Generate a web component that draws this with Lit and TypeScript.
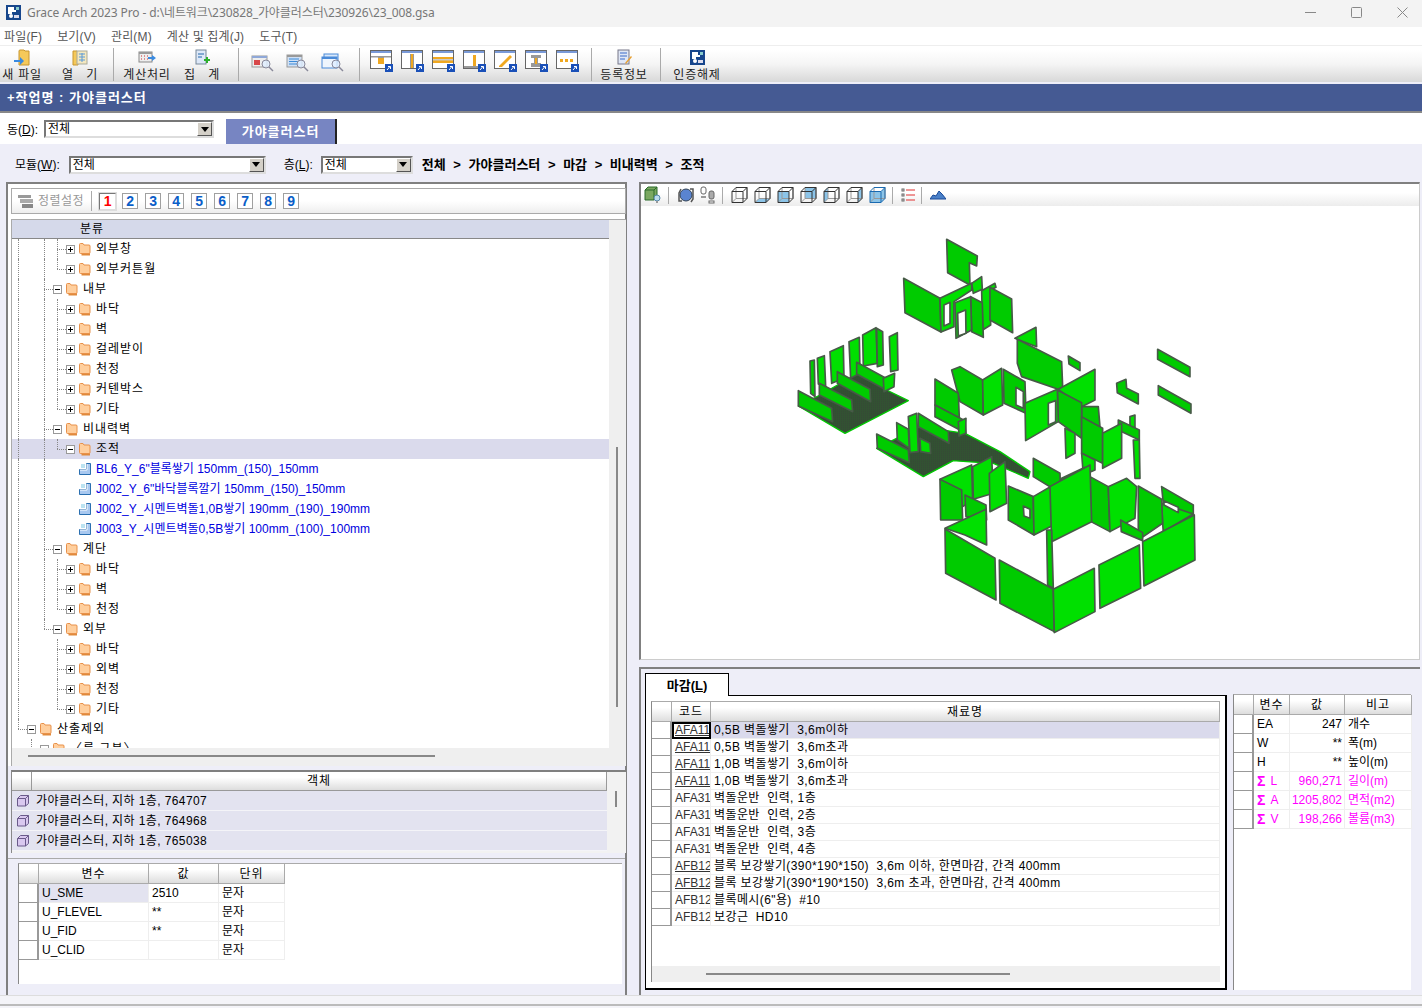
import { LitElement, css, html, svg } from 'lit';
import { customElement } from 'lit/decorators.js';

const folder = html`<svg class="ficon" width="12" height="13" viewBox="0 0 12 13"><path d="M2.500 2.500h8.500v10H2.500z" fill="#e08a3c"/><path d="M.5 1.500q0-1 1-1h2.500l1 1.500h5q1 0 1 1v6.500q0 1-1 1H1.500q-1 0-1-1z" fill="#ffcf9e" stroke="#e8914a"/></svg>`;
const leaf = html`<svg class="ficon" width="12" height="12" viewBox="0 0 12 12"><path d="M.5 6.500h7v-6h4v11H.5z" fill="#a9c8ef" stroke="#2a6fb0"/><path d="M1 7h7M8 1v6" stroke="#fff"/><rect x="2" y="1" width="4" height="4" fill="#8fd0e8" opacity=".6"/></svg>`;
const box3d = html`<svg width="13" height="13" viewBox="0 0 13 13"><path d="M1.500 4.500l3-3h8v8l-3 2.500h-8z" fill="#d9c8ef" stroke="#6a5a8a"/><path d="M1.500 4.500h8v7.500M9.500 4.500l3-3" fill="none" stroke="#6a5a8a"/></svg>`;

// [guides, expander, label, kind]; guides: v = line, t = tee, l = corner, _ = empty
const tree: [string, string, string, string?][] = [
  ['v_vt', '+', '외부창'], ['v_vl', '+', '외부커튼월'],
  ['v_t', '-', '내부'],
  ['v_vt', '+', '바닥'], ['v_vt', '+', '벽'], ['v_vt', '+', '걸레받이'], ['v_vt', '+', '천정'], ['v_vt', '+', '커텐박스'], ['v_vl', '+', '기타'],
  ['v_t', '-', '비내력벽'],
  ['v_vl', '-', '조적', 'sel'],
  ['v_v__', '', 'BL6_Y_6"블록쌓기 150mm_(150)_150mm', 'leaf'],
  ['v_v__', '', 'J002_Y_6"바닥블록깔기 150mm_(150)_150mm', 'leaf'],
  ['v_v__', '', 'J002_Y_시멘트벽돌1,0B쌓기 190mm_(190)_190mm', 'leaf'],
  ['v_v__', '', 'J003_Y_시멘트벽돌0,5B쌓기 100mm_(100)_100mm', 'leaf'],
  ['v_t', '-', '계단'],
  ['v_vt', '+', '바닥'], ['v_vt', '+', '벽'], ['v_vl', '+', '천정'],
  ['v_l', '-', '외부'],
  ['v__t', '+', '바닥'], ['v__t', '+', '외벽'], ['v__t', '+', '천정'], ['v__l', '+', '기타'],
  ['l', '-', '산출제외'],
  ['_v', '-', '〈룸 구분〉'],
];

const materials: [string, string, boolean][] = [
  ['AFA11', '0,5B 벽돌쌓기  3,6m이하', true],
  ['AFA11', '0,5B 벽돌쌓기  3,6m초과', true],
  ['AFA11', '1,0B 벽돌쌓기  3,6m이하', true],
  ['AFA11', '1,0B 벽돌쌓기  3,6m초과', true],
  ['AFA31', '벽돌운반  인력, 1층', false],
  ['AFA31', '벽돌운반  인력, 2층', false],
  ['AFA31', '벽돌운반  인력, 3층', false],
  ['AFA31', '벽돌운반  인력, 4층', false],
  ['AFB12', '블록 보강쌓기(390*190*150)  3,6m 이하, 한면마감, 간격 400mm', true],
  ['AFB12', '블록 보강쌓기(390*190*150)  3,6m 초과, 한면마감, 간격 400mm', true],
  ['AFB12', '블록메시(6"용)  #10', false],
  ['AFB12', '보강근  HD10', false],
];

const sums: [string, string, string, boolean][] = [
  ['EA', '247', '개수', false], ['W', '**', '폭(m)', false], ['H', '**', '높이(m)', false],
  ['L', '960,271', '길이(m)', true], ['A', '1205,802', '면적(m2)', true], ['V', '198,266', '볼륨(m3)', true],
];

const vars = [['U_SME', '2510', '문자'], ['U_FLEVEL', '**', '문자'], ['U_FID', '**', '문자'], ['U_CLID', '', '문자']];

// model faces, in 3x coordinates from the model's corner: light = front facing, dark = side facing
const light = [
  '480,205 575,160 575,180 522,215 522,290 483,306', '575,160 605,140 607,178 580,190', '525,218 572,200 575,300 528,325', '605,182 645,160 648,172 632,180 632,285 608,300',
  '150,365 190,347 192,445 155,460', '207,335 238,322 240,430 212,445', '248,315 288,293 292,400 250,408', '328,320 352,308 354,420 332,425', '112,385 133,377 137,470 115,462', '310,445 344,430 342,470 312,485',
  '350,578 385,598 388,655 352,630', '385,560 410,550 415,665 390,668', '535,575 558,565 557,610 537,618', '420,625 450,640 452,670 422,665',
  '608,450 665,415 668,525 610,555', '705,325 768,292 770,350 712,328', '835,478 945,418 945,510 905,530', '735,520 832,478 835,575 737,632', '855,595 885,610 885,670 858,685',
  '968,610 1025,580 1025,685 968,715', '905,670 945,690 945,720 910,735', '845,745 915,712 915,800 845,800', '1050,560 1065,555 1065,595 1050,590', '1060,630 1078,630 1080,745 1065,745',
  '480,748 575,705 578,810 548,830', '578,710 635,680 640,790 580,808', '628,730 675,695 680,820 630,845', '760,800 855,745 870,860 762,915', '810,770 930,705 935,875 815,935',
  '985,770 1040,745 1070,770 1065,865 990,905', '1145,820 1240,852 1150,905 1148,880', '495,895 618,838 620,945 555,915',
  '820,1078 943,1015 945,1145 823,1208', '957,1005 1078,945 1082,1075 960,1135', '1088,935 1243,855 1245,990 1092,1068',
];
const dark = [
  '500,28 592,78 590,108 568,98 570,165 503,128', '371,145 480,205 483,306 375,248', '572,200 607,218 610,322 575,305', '630,172 695,207 698,308 630,270',
  '55,482 155,535 158,575 55,528', '118,460 215,510 218,545 118,495', '172,425 270,478 272,515 172,460', '230,397 318,445 318,480 230,432', '290,295 308,305 310,405 292,410', '90,393 103,390 105,500 92,490',
  '290,612 385,660 388,698 292,655', '415,550 505,605 507,640 415,590', '465,525 555,572 558,610 465,560',
  '465,447 535,490 538,565 465,525', '515,420 540,410 608,450 610,555 540,515', '670,418 735,455 738,550 672,520', '712,328 845,395 848,470 835,478 725,440 712,400', '832,480 905,518 905,625 835,575', '865,378 900,398 900,422 867,402',
  '1133,358 1230,412 1230,440 1133,388', '1135,467 1233,522 1233,550 1135,495', '1010,460 1038,448 1040,475 1075,492 1075,522 1012,488',
  '905,530 955,530 960,590 905,565', '905,560 968,595 968,700 905,670', '1015,570 1078,600 1078,630 1015,600',
  '480,748 545,780 548,870 482,870', '760,685 840,730 842,790 760,740', '685,768 760,800 762,915 685,870', '875,790 915,810 915,835 878,818', '930,740 985,770 990,905 933,875',
  '1075,768 1145,808 1148,880 1090,920 1075,905', '1145,770 1240,825 1240,852 1195,848 1150,820', '1022,870 1088,908 1088,932 1024,905', '555,795 618,825 620,870 558,860',
  '495,897 645,985 648,1110 497,1030', '658,990 820,1078 823,1205 660,1120', '800,900 815,900 820,1075 803,1065',
];
const floors = ['55,528 195,610 385,512 320,480 230,432 120,495', '290,655 430,740 520,692 560,695 640,700 745,745 750,725 660,665 555,610 420,590'];
const holes = ['492,225 510,217 510,280 492,288', '533,250 557,240 558,310 535,318', '708,472 730,485 730,535 708,525', '805,520 827,512 827,575 805,585', '1152,812 1195,832 1195,848 1152,825', '730,828 750,838 750,865 732,858'];

const bottom = (p: string) => Math.max(...p.split(' ').map(xy => Number(xy.split(',')[1])));
const faces = [...dark.map(p => ({ p, fill: '#00cb00' })), ...light.map(p => ({ p, fill: '#00e000' }))]
  .sort((a, b) => bottom(a.p) - bottom(b.p));

const model = svg`
  <defs>
    <pattern id="hatch" width="6" height="6" patternUnits="userSpaceOnUse"><rect width="6" height="6" fill="#354a35"/><path d="M0 3h2M4 0h1" stroke="#1a8f1a"/></pattern>
  </defs>
  <g transform="translate(139 24) scale(.3333)" stroke="#475a47" stroke-width="5" stroke-linejoin="round">
    ${floors.map(p => svg`<polygon points=${p} fill="url(#hatch)" stroke="#00c800" stroke-width="4"/>`)}
    ${faces.map(f => svg`<polygon points=${f.p} fill=${f.fill}/>`)}
    ${holes.map(p => svg`<polygon points=${p} fill="#fff"/>`)}
  </g>`;

const winIcon = (inner: unknown) => html`<svg width="24" height="23" viewBox="0 0 24 23">
  <rect x=".5" y=".5" width="21" height="18" fill="#fff" stroke="#666"/>
  <rect x="1" y="1" width="20" height="2" fill="#7a9ad8"/>
  ${inner}
  <rect x="15" y="14" width="8" height="8" fill="#1a50b8"/><path d="M17 20l3-3.500M18 16.500h2.500V19" stroke="#fff" fill="none"/>
</svg>`;

const windows = [
  svg`<path d="M1 6h20v1.500H14V13H8V7.500H1z" fill="#999"/><rect x="8" y="8" width="6" height="6" fill="#f0a820"/>`,
  svg`<rect x="9" y="4" width="4" height="14" fill="#999"/><rect x="10" y="4" width="2" height="14" fill="#f0a820"/>`,
  svg`<rect x="1" y="7" width="20" height="6" fill="#f0a820"/><rect x="1" y="9" width="20" height="1.500" fill="#ccc"/>`,
  svg`<rect x="10" y="5" width="3" height="11" fill="#f0a820"/><rect x="1" y="16" width="15" height="2" fill="#999"/>`,
  svg`<path d="M5 16l11-11 2 2-10 10H5z" fill="#f0a820"/>`,
  svg`<path d="M6 5h10v3h-3v5h3v4H6v-4h3V8H6z" fill="#999"/><rect x="10" y="8" width="2" height="6" fill="#f0a820"/>`,
  svg`<rect x="4" y="9" width="3" height="3" fill="#f0a820"/><rect x="9" y="9" width="3" height="3" fill="#f0a820"/><rect x="14" y="9" width="3" height="3" fill="#f0a820"/>`,
];

const lens = svg`<circle cx="15" cy="11" r="4" fill="#dfeeff" fill-opacity=".8" stroke="#889"/><path d="M18 14l4 4" stroke="#889" stroke-width="1.500"/>`;
const searchIcons = [
  html`<svg width="24" height="20" viewBox="0 0 24 20"><rect x="1" y="3" width="15" height="11" fill="#eee" stroke="#999"/><rect x="1" y="3" width="15" height="2" fill="#8fa8d8"/><rect x="3" y="7" width="6" height="5" fill="#d8484a"/>${lens}</svg>`,
  html`<svg width="24" height="20" viewBox="0 0 24 20"><rect x="1" y="2" width="15" height="12" fill="#cfe0f5" stroke="#999"/><rect x="1" y="2" width="15" height="2" fill="#999"/><path d="M3 6h10M3 8.500h10M3 11h10" stroke="#3a8ad8"/>${lens}</svg>`,
  html`<svg width="24" height="20" viewBox="0 0 24 20"><rect x="3" y="1" width="14" height="8" fill="#d8e8fb" stroke="#4a8ad8"/><rect x="1" y="4" width="15" height="11" fill="#eef5fd" stroke="#4a8ad8"/><rect x="1" y="4" width="15" height="2" fill="#4a8ad8"/>${lens}</svg>`,
];

const cube = (face: string) => html`<svg width="17" height="16" viewBox="0 0 17 16">
  ${face === 'top' ? svg`<path d="M1 4.500l4-4h11l-4 4z" fill="#8cc4e8"/>` : ''}
  ${face === 'bottom' ? svg`<path d="M1 15.500l4-4h11l-4 4z" fill="#8cc4e8"/>` : ''}
  ${face === 'front' || face === 'all' ? svg`<rect x="1" y="4.500" width="11" height="11" fill="#8cc4e8"/>` : ''}
  ${face === 'back' ? svg`<rect x="5" y=".5" width="11" height="11" fill="#8cc4e8"/>` : ''}
  ${face === 'left' ? svg`<path d="M1 4.500l4-4v11l-4 4z" fill="#8cc4e8"/>` : ''}
  ${face === 'right' || face === 'all' ? svg`<path d="M12 4.500l4-4v11l-4 4z" fill="#8cc4e8"/>` : ''}
  <path d="M5 .5h11v11H5zM1 15.500l4-4" fill="none" stroke="#999"/>
  <path d="M1 4.500h11v11H1zM1 4.500l4-4h11v11l-4 4M12 4.500l4-4" fill="none" stroke=${face === 'all' ? '#1a6ab0' : '#333'}/>
</svg>`;

const arrow = html`<span class="arrow"></span>`;

const logo = html`<svg width="15" height="15" viewBox="0 0 15 15"><rect width="15" height="15" fill="#17468c"/><path d="M2 2h6v3h2v2H6v2H2z" fill="#fff"/><rect x="10" y="2" width="3" height="3" fill="#8cc"/><circle cx="5" cy="11" r="2" fill="#fff"/><path d="M8 10h5v3H8z" fill="#dde"/></svg>`;

@customElement('app-root')
export class AppRoot extends LitElement {
  static styles = css`
    :host { display: block; width: 1422px; height: 1008px; overflow: hidden; background: #eeeef8; color: #000;
      font: 12px/1 "Liberation Sans", "Noto Sans CJK KR", sans-serif; }
    * { box-sizing: border-box; }
    svg { display: block; flex: none; }

    .title { height: 27px; background: #f3f3f3; display: flex; align-items: center; padding: 0 0 3px 6px; gap: 6px; color: #777; font: 12px "Noto Sans", "Noto Sans CJK KR", sans-serif; letter-spacing: -.1px; }
    .title .ctl { margin-left: auto; margin-right: -3px; display: flex; }
    .ctl span { width: 46px; height: 24px; display: flex; align-items: center; justify-content: center; }
    .menu { height: 18px; background: #fff; display: flex; gap: 15px; padding: 2px 0 0 4px; color: #555; align-items: center; letter-spacing: .15px; }
    .toolbar { height: 37px; background: linear-gradient(#fff 10%, #f5f5f5 50%, #d8d8d8); border-top: 1px solid #eee; display: flex; align-items: stretch; margin-bottom: 2px; }
    .group { display: flex; align-items: flex-start; border-right: 1px solid #aaa; margin: 2px 0; height: 33px; flex: none; }
    .g1 { width: 114px; gap: 14px; }
    .g2 { width: 125px; gap: 11px; padding-left: 11px; }
    .g3 { width: 121px; gap: 5px; padding: 5px 0 0 9px; }
    .g4 { width: 232px; padding: 2px 0 0 6px; }
    .g5 { width: 69px; padding-left: 10px; }
    .g6 { width: 100px; padding-left: 14px; border: 0; }
    .tool { width: 44px; margin-top: 1px; display: flex; flex-direction: column; align-items: center; gap: 3px; color: #222; white-space: pre; letter-spacing: .8px; }
    .tool svg { height: 17px; }
    .g3 > span { width: 30px; display: flex; justify-content: center; }
    .g4 > span { width: 31px; display: flex; justify-content: center; }

    .job { height: 29px; background: #455a93; border-bottom: 2px solid #888; color: #fff; font-weight: 700; display: flex; align-items: center; padding-left: 7px; font-size: 13px; letter-spacing: 1px; }
    .dong { height: 31px; background: #fff; display: flex; align-items: flex-end; padding-left: 7px; }
    .dong label { margin-bottom: 8px; margin-right: 6px; }
    .dong .combo { width: 170px; margin-bottom: 6px; }
    .tabhead { margin-left: 12px; width: 111px; height: 25px; background: #7785c2; color: #fff; font-weight: 700; font-size: 13px; letter-spacing: 1px; display: flex; align-items: center; justify-content: center; border-right: 2px solid #222; }
    u { text-decoration: underline; }
    .combo { height: 18px; border: 2px solid; border-color: #777 #ddd #ddd #777; background: #fff; display: flex; align-items: center; padding-left: 2px; justify-content: space-between; }
    .arrow { width: 15px; height: 14px; background: #d4d0c8; border: 1px solid; border-color: #fff #555 #555 #fff; display: flex; align-items: center; justify-content: center; }
    .arrow::after { content: ""; border: 4px solid transparent; border-top: 5px solid #000; border-bottom: 0; }

    .module { height: 38px; display: flex; align-items: center; padding: 3px 0 0 15px; }
    .module label { margin-right: 9px; }
    .module label.l2 { margin-right: 8px; }
    .c1 { width: 197px; margin-right: 18px; }
    .c2 { width: 92px; margin-right: 9px; }
    .crumb { font-weight: 700; font-size: 13px; word-spacing: 4px; }

    .main { height: 813px; display: flex; padding-left: 6px; gap: 12px; }
    .left { width: 621px; flex: none; display: flex; flex-direction: column; border: solid #808080; border-width: 2px 2px 0 2px; }
    .treepanel { height: 582px; padding: 4px 0 0 3px; background: #fff; display: flex; flex-direction: column; }
    .sortbar { height: 26px; width: 615px; border: 1px solid #aaa; display: flex; align-items: center; padding-left: 5px; background: linear-gradient(#fff 50%, #eee); color: #999; flex: none; }
    .sortbar .sort { display: flex; align-items: center; gap: 3px; padding-right: 7px; border-right: 1px solid #aaa; height: 20px; margin-right: 7px; letter-spacing: .5px; }
    .num { width: 16px; height: 16px; margin-right: 7px; border: 1px solid #a0a0a0; color: #0a5ec8; background: #fff; font-weight: 700; font-size: 14px; display: flex; align-items: center; justify-content: center; }
    .num.on { color: #f00; border-color: #777 #ddd #ddd #777; width: 17px; height: 17px; margin-right: 6px; outline: 1px solid #ddd; }
    .treewrap { margin-top: 5px; display: flex; width: 615px; height: 547px; border-top: 1px solid #aaa; border-left: 1px solid #aaa; background: #efefef; position: relative; }
    .treecol { width: 597px; height: 528px; background: #fff; display: flex; flex-direction: column; }
    .treehead { height: 19px; flex: none; background: #d5d9ea; border-bottom: 1px solid #888; padding: 3px 0 0 68px; letter-spacing: 1px; }
    .rows { flex: 1; overflow: hidden; }
    .row { height: 20px; display: flex; align-items: center; white-space: pre; letter-spacing: 1px; }
    .row.sel { background: #dadaec; }
    .row.leaf { color: #0000e0; letter-spacing: 0; }
    .cell { width: 13px; height: 20px; flex: none; position: relative; }
    .cell.v::before, .cell.t::before, .cell.l::before { content: ""; position: absolute; left: 6px; top: 0; bottom: 0; border-left: 1px dotted #888; }
    .cell.l::before { bottom: 10px; }
    .cell.t::after, .cell.l::after { content: ""; position: absolute; left: 6px; right: -2px; top: 10px; border-top: 1px dotted #888; }
    .exp { width: 13px; height: 20px; flex: none; display: flex; align-items: center; justify-content: center; }
    .exp span { width: 9px; height: 9px; background: #fff; border: 1px solid #999; position: relative; z-index: 1; }
    .exp span::before { content: ""; position: absolute; left: 1px; right: 1px; top: 3px; height: 1px; background: #000; }
    .exp .plus::after { content: ""; position: absolute; top: 1px; bottom: 1px; left: 3px; width: 1px; background: #000; }
    .ficon { margin-left: 2px; }
    .row .txt { margin-left: 5px; }
    .vthumb { position: absolute; left: 604px; top: 227px; width: 2px; height: 260px; background: #888; }
    .hthumb { position: absolute; left: 16px; top: 535px; width: 407px; height: 2px; background: #888; }

    .gap { height: 4px; flex: none; background: #eeeef8; }
    .objects { height: 83px; flex: none; border-top: 2px solid #808080; background: #f2f2f2; display: flex; margin-left: 3px; width: 615px; border-left: 1px solid #888; position: relative; flex-direction: column; }
    .ohead { display: grid; grid-template-columns: 20px 575px; height: 19px; flex: none; }
    .ohead div { background: linear-gradient(#fff 30%, #ddd); border-right: 1px solid #999; border-bottom: 1px solid #999; display: flex; align-items: center; justify-content: center; letter-spacing: 1px; }
    .orow { height: 20px; flex: none; width: 595px; display: grid; grid-template-columns: 20px 1fr; background: #e3e3f0; border-bottom: 1px solid #f4f4f8; align-items: center; letter-spacing: .4px; }
    .orow span:first-child { display: flex; justify-content: center; }
    .orow span + span { padding-left: 4px; }
    .othumb { position: absolute; left: 603px; top: 19px; width: 2px; height: 16px; background: #888; }
    .vars { flex: 1; padding: 4px 0 0 10px; border-top: 1px solid #aaa; margin-top: 5px; background: #eeeef8; }
    .vars .frame { width: 604px; height: 121px; background: #fff; border-top: 1px solid #aaa; border-left: 1px solid #888; }

    .grid { display: grid; }
    .h { background: linear-gradient(#fff 30%, #ddd); border-right: 1px solid #aaa; border-bottom: 1px solid #aaa; display: flex; align-items: center; justify-content: center; height: 20px; letter-spacing: 1px; }
    .c { height: 19px; border-right: 1px solid #eee; border-bottom: 1px solid #eee; display: flex; align-items: center; padding: 0 3px; white-space: pre; overflow: hidden; background: #fff; }
    .rh { background: #fff; border-right: 2px solid #999; border-bottom: 1px solid #999; height: 19px; }
    .vgrid { width: 266px; grid-template-columns: 20px 110px 70px 66px; }
    .vgrid .hl { background: #e3e3f0; }

    .right { width: 781px; flex: none; display: flex; flex-direction: column; }
    .viewer { height: 478px; flex: none; border: solid #808080; border-width: 2px 0 0 2px; background: #fff; display: flex; flex-direction: column; border-bottom: 1px solid #ccc; border-right: 1px solid #ccc; }
    .vbar { height: 22px; flex: none; display: flex; align-items: center; background: linear-gradient(#fff 40%, #ececec); padding-left: 3px; }
    .vbar .sep { width: 1px; height: 17px; background: #aaa; margin: 0 8px 0 6px; }
    .vbar .cubes { display: flex; gap: 6px; }
    .vbar .foot { margin-left: 5px; }
    .canvas { flex: 1; width: 100%; min-height: 0; }
    .lower { flex: none; height: 328px; margin-top: 7px; border: solid #808080; border-width: 2px 0 0 2px; padding: 4px 0 0 4px; display: flex; background: #eeeef8; }
    .tabpane { width: 582px; display: flex; flex-direction: column; }
    .ltab { width: 84px; height: 23px; background: #fff; border: 1px solid #000; border-bottom: 0; font-weight: 700; font-size: 13px; display: flex; align-items: center; justify-content: center; margin-bottom: -1px; position: relative; z-index: 1; }
    .pane { height: 295px; border: 1px solid #000; border-width: 1px 2px 2px 1px; background: #fff; padding: 5px 0 0 5px; }
    .frame2 { width: 569px; height: 281px; border-top: 1px solid #aaa; border-left: 1px solid #888; display: flex; flex-direction: column; }
    .mgrid { grid-template-columns: 20px 39px 509px; letter-spacing: .4px; }
    .mgrid .h { height: 20px; letter-spacing: 1px; }
    .mgrid .c, .mgrid .rh { height: 17px; }
    .mgrid .code { padding: 0; padding-left: 3px; color: #333; letter-spacing: 0; }
    .mgrid .code.link { text-decoration: underline; }
    .mgrid .code.focus { outline: 2px solid #000; outline-offset: -2px; }
    .mgrid .first { background: #dadaec; }
    .fill { flex: 1; }
    .mscroll { height: 16px; flex: none; background: #efefef; display: flex; align-items: center; padding-left: 54px; }
    .mscroll span { width: 304px; height: 2px; background: #888; }
    .sum { margin: 21px 0 0 6px; width: 178px; background: #fff; height: 296px; border-top: 1px solid #aaa; border-left: 1px solid #888; align-self: flex-start; }
    .sgrid { grid-template-columns: 20px 36px 55px 67px; }
    .sgrid .num2 { justify-content: flex-end; padding-right: 2px; }
    .sgrid .mag { color: #f0f; }
    .sgrid b { margin-right: 5px; font-size: 14px; }
    .sgrid .rh, .sgrid .c { height: 19px; }
    .status { height: 13px; background: #f4f4f8; border-top: 1px solid #ddd; }
    .status div { height: 10px; border-bottom: 2px solid #bbb; }
  `;

  renderRow(r: [string, string, string, string?]) {
    const [guides, exp, label, kind] = r;
    return html`<div class="row ${kind ?? ''}">
      ${[...guides].map(g => html`<span class="cell ${g}"></span>`)}
      ${exp ? html`<span class="exp"><span class=${exp === '+' ? 'plus' : ''}></span></span>` : ''}
      ${kind === 'leaf' ? leaf : folder}
      <span class="txt">${label}</span>
    </div>`;
  }

  render() {
    return html`
      <div class="title">
        ${logo}
        <span>Grace Arch 2023 Pro - d:\\네트워크\\230828_가야클러스터\\230926\\23_008.gsa</span>
        <div class="ctl">
          <span><svg width="11" height="11" viewBox="0 0 11 11"><path d="M0 5.500h11" stroke="#888"/></svg></span>
          <span><svg width="11" height="11" viewBox="0 0 11 11"><rect x=".5" y=".5" width="10" height="10" rx="1" fill="none" stroke="#888"/></svg></span>
          <span><svg width="11" height="11" viewBox="0 0 11 11"><path d="M.5.500l10 10M10.500.500l-10 10" stroke="#888"/></svg></span>
        </div>
      </div>
      <div class="menu"><span>파일(F)</span><span>보기(V)</span><span>관리(M)</span><span>계산 및 집계(J)</span><span>도구(T)</span></div>
      <div class="toolbar">
        <div class="group g1">
          <div class="tool"><svg width="18" height="17" viewBox="0 0 18 17"><path d="M6 2q0-1 1-1h4l1 1h4v14H6z" fill="#f5c95a" stroke="#c8962e"/><path d="M1 11h6V8l4 4-4 4v-3H1z" fill="#3a8ae0"/></svg><span>새 파일</span></div>
          <div class="tool"><svg width="16" height="17" viewBox="0 0 16 17"><path d="M1 2h4l1 1v13H1z" fill="#f5c95a" stroke="#c8962e"/><rect x="5" y="2" width="10" height="13" fill="#f4e8c0" stroke="#aa9"/><path d="M7 5h6M7 8h6M7 11h6M10 4v9" stroke="#5a9ad8"/></svg><span>열   기</span></div>
        </div>
        <div class="group g2">
          <div class="tool"><svg width="18" height="17" viewBox="0 0 18 17"><rect x="1" y="3" width="13" height="10" fill="#eee" stroke="#888"/><rect x="1" y="3" width="13" height="2" fill="#999"/><path d="M3 7h1M6 7h1M9 7h1M3 10h1M6 10h1M9 10h1" stroke="#c33"/><path d="M10 8h4V6l4 3-4 3v-2h-4z" fill="#3a8ae0"/></svg><span>계산처리</span></div>
          <div class="tool"><svg width="16" height="17" viewBox="0 0 16 17"><rect x="2" y="1" width="10" height="14" fill="#dde8f8" stroke="#789"/><path d="M4 5h6M4 8h4" stroke="#26a"/><path d="M10 10h2V8h2v2h2v2h-2v2h-2v-2h-2z" fill="#2cb02c"/></svg><span>집   계</span></div>
        </div>
        <div class="group g3">${searchIcons.map(i => html`<span>${i}</span>`)}</div>
        <div class="group g4">${windows.map(w => html`<span>${winIcon(w)}</span>`)}</div>
        <div class="group g5">
          <div class="tool"><svg width="17" height="17" viewBox="0 0 17 17"><rect x="2" y="1" width="11" height="14" fill="#dfe6f5" stroke="#778"/><path d="M4 4h7M4 7h7M4 10h5" stroke="#3a6ac8"/><path d="M9 14l6-7 1 1-6 7z" fill="#e8a030"/></svg><span>등록정보</span></div>
        </div>
        <div class="group g6">
          <div class="tool">${logo}<span>인증해제</span></div>
        </div>
      </div>
      <div class="job">+작업명 : 가야클러스터</div>
      <div class="dong">
        <label>동(<u>D</u>):</label>
        <div class="combo"><span>전체</span>${arrow}</div>
        <div class="tabhead">가야클러스터</div>
      </div>
      <div class="module">
        <label>모듈(<u>W</u>):</label>
        <div class="combo c1"><span>전체</span>${arrow}</div>
        <label class="l2">층(<u>L</u>):</label>
        <div class="combo c2"><span>전체</span>${arrow}</div>
        <span class="crumb">전체 &gt; 가야클러스터 &gt; 마감 &gt; 비내력벽 &gt; 조적</span>
      </div>
      <div class="main">
        <div class="left">
          <div class="treepanel">
            <div class="sortbar">
              <span class="sort"><svg width="18" height="16" viewBox="0 0 18 16"><rect x="1" y="2" width="13" height="3" fill="#999"/><rect x="3" y="6" width="13" height="4" fill="#aaa"/><rect x="5" y="11" width="11" height="4" fill="#888"/></svg>정렬설정</span>
              ${[1, 2, 3, 4, 5, 6, 7, 8, 9].map(n => html`<span class="num ${n === 1 ? 'on' : ''}">${n}</span>`)}
            </div>
            <div class="treewrap">
              <div class="treecol">
                <div class="treehead">분류</div>
                <div class="rows">${tree.map(r => this.renderRow(r))}</div>
              </div>
              <span class="vthumb"></span>
              <span class="hthumb"></span>
            </div>
          </div>
          <div class="gap"></div>
          <div class="objects">
            <div class="ohead"><div></div><div>객체</div></div>
            ${['764707', '764968', '765038'].map(id => html`<div class="orow"><span>${box3d}</span><span>가야클러스터, 지하 1층, ${id}</span></div>`)}
            <span class="othumb"></span>
          </div>
          <div class="vars">
            <div class="frame">
              <div class="grid vgrid">
                <div class="h"></div><div class="h">변수</div><div class="h">값</div><div class="h">단위</div>
                ${vars.map((v, i) => html`<div class="rh"></div><div class="c ${i === 0 ? 'hl' : ''}">${v[0]}</div><div class="c">${v[1]}</div><div class="c">${v[2]}</div>`)}
              </div>
            </div>
          </div>
        </div>
        <div class="right">
          <div class="viewer">
            <div class="vbar">
              <svg width="18" height="18" viewBox="0 0 18 18"><path d="M1 4l3-3h9v10l-3 3H1z" fill="#7aa860" stroke="#2a6a2a"/><path d="M1 4h9v10M10 4l3-3" fill="none" stroke="#2a6a2a"/><circle cx="13" cy="12" r="3" fill="#bde" stroke="#58a"/><path d="M12 15h2v2h-2z" fill="#999"/></svg>
              <span class="sep"></span>
              <svg width="18" height="18" viewBox="0 0 18 18"><path d="M4 3l-2 4v8h3M13 3h3v10l-2 3" fill="none" stroke="#555" stroke-width="1.500"/><circle cx="9" cy="9" r="6" fill="#5a84d0" stroke="#345"/></svg>
              <svg class="foot" width="16" height="18" viewBox="0 0 16 18"><rect x="1" y="1" width="5" height="7" rx="2" fill="#fff" stroke="#666"/><rect x="1" y="10" width="5" height="2" fill="#999"/><rect x="9" y="5" width="5" height="8" rx="2" fill="#aaa" stroke="#666"/><rect x="9" y="15" width="5" height="2" fill="#fff" stroke="#666"/></svg>
              <span class="sep"></span>
              <div class="cubes">${['none', 'bottom', 'front', 'back', 'left', 'right', 'all'].map(f => cube(f))}</div>
              <span class="sep"></span>
              <svg width="14" height="14" viewBox="0 0 14 14"><path d="M5 2h9M5 7h9M5 12h9" stroke="#e03030"/><rect x="1" y="1" width="2" height="2" fill="#fff" stroke="#666"/><rect x="1" y="6" width="2" height="2" fill="#fff" stroke="#666"/><rect x="1" y="11" width="2" height="2" fill="#fff" stroke="#666"/></svg>
              <span class="sep"></span>
              <svg width="16" height="10" viewBox="0 0 16 10"><path d="M0 9l3-4 3 1 3-5 3 3 4 5z" fill="#4a80c8" stroke="#1a4a98"/></svg>
            </div>
            <svg class="canvas" viewBox="0 0 778 452" preserveAspectRatio="xMinYMin">${model}</svg>
          </div>
          <div class="lower">
            <div class="tabpane">
              <div class="ltab"><span>마감(<u>L</u>)</span></div>
              <div class="pane">
                <div class="frame2">
                  <div class="grid mgrid">
                    <div class="h"></div><div class="h">코드</div><div class="h">재료명</div>
                    ${materials.map((m, i) => html`<div class="rh"></div><div class="c code ${m[2] ? 'link' : ''} ${i === 0 ? 'focus' : ''}">${m[0]}</div><div class="c ${i === 0 ? 'first' : ''}">${m[1]}</div>`)}
                  </div>
                  <div class="fill"></div>
                  <div class="mscroll"><span></span></div>
                </div>
              </div>
            </div>
            <div class="sum">
              <div class="grid sgrid">
                <div class="h"></div><div class="h">변수</div><div class="h">값</div><div class="h">비고</div>
                ${sums.map(s => html`<div class="rh"></div><div class="c ${s[3] ? 'mag' : ''}">${s[3] ? html`<b>Σ</b>` : ''}${s[0]}</div><div class="c num2 ${s[3] ? 'mag' : ''}">${s[1]}</div><div class="c ${s[3] ? 'mag' : ''}">${s[2]}</div>`)}
              </div>
            </div>
          </div>
        </div>
      </div>
      <div class="status"><div></div></div>`;
  }
}
